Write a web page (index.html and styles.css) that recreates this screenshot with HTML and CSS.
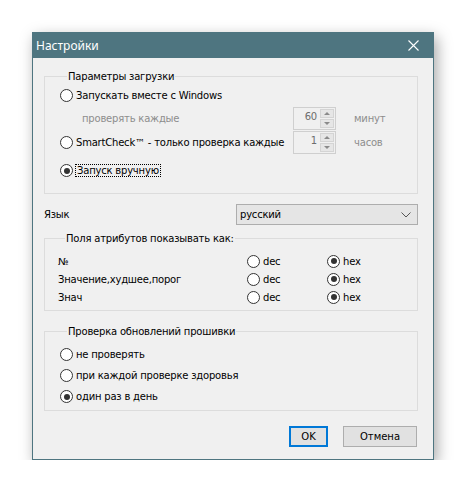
FILE: index.html
```html
<!DOCTYPE html>
<html lang="ru">
<head>
  <meta charset="UTF-8">
  <title>Настройки</title>
  <link rel="stylesheet" href="styles.css">
</head>
<body>
  <div class="window">
    <div class="titlebar">
      <span class="title">Настройки</span>
      <svg class="close" width="11" height="11" viewBox="0 0 11 11"><path d="M0.5 0.5L10.5 10.5M10.5 0.5L0.5 10.5" stroke="#fff" stroke-width="1.1"/></svg>
    </div>

    <div class="content">
      <fieldset class="group boot">
        <legend>Параметры загрузки</legend>
        <div class="boot-row r1">
          <label class="radio"><span class="circle"></span>Запускать вместе с Windows</label>
        </div>
        <div class="boot-row r2">
          <span class="muted indent">проверять каждые</span>
          <div class="spin"><span class="spin-val">60</span><span class="spin-btns"><span class="up"></span><span class="down"></span></span></div>
          <span class="muted unit">минут</span>
        </div>
        <div class="boot-row r3">
          <label class="radio"><span class="circle"></span>SmartCheck™ - только проверка каждые</label>
          <div class="spin"><span class="spin-val">1</span><span class="spin-btns"><span class="up"></span><span class="down"></span></span></div>
          <span class="muted unit">часов</span>
        </div>
        <div class="boot-row r4">
          <label class="radio checked"><span class="circle"></span><span class="focus">Запуск вручную</span></label>
        </div>
      </fieldset>

      <div class="lang-row">
        <span>Язык</span>
        <div class="select">
          <span>русский</span>
          <svg width="10" height="6" viewBox="0 0 10 6"><path d="M0.5 0.5L5 5L9.5 0.5" fill="none" stroke="#555" stroke-width="1"/></svg>
        </div>
      </div>

      <fieldset class="group attrs">
        <legend>Поля атрибутов показывать как:</legend>
        <div class="attr-row">
          <span>№</span>
          <label class="radio"><span class="circle"></span>dec</label>
          <label class="radio checked"><span class="circle"></span>hex</label>
        </div>
        <div class="attr-row">
          <span>Значение,худшее,порог</span>
          <label class="radio"><span class="circle"></span>dec</label>
          <label class="radio checked"><span class="circle"></span>hex</label>
        </div>
        <div class="attr-row">
          <span>Знач</span>
          <label class="radio"><span class="circle"></span>dec</label>
          <label class="radio checked"><span class="circle"></span>hex</label>
        </div>
      </fieldset>

      <fieldset class="group firmware">
        <legend>Проверка обновлений прошивки</legend>
        <label class="radio"><span class="circle"></span>не проверять</label>
        <label class="radio"><span class="circle"></span>при каждой проверке здоровья</label>
        <label class="radio checked"><span class="circle"></span>один раз в день</label>
      </fieldset>

      <div class="buttons">
        <button class="btn ok">OK</button>
        <button class="btn cancel">Отмена</button>
      </div>
    </div>
  </div>
</body>
</html>
```

FILE: styles.css
```css
body { margin:0; background:#fff; font-family:"DejaVu Sans",sans-serif; font-size:10px; letter-spacing:-0.2px; color:#000; }
.window { margin:32px 0 0 32px; width:400px; height:426px; border:1px solid #4e7580;
          background:#f0f0f0; box-shadow:3px 5px 14px rgba(0,0,0,0.35); display:flex; flex-direction:column; }
.titlebar { height:25px; background:#4e7580; color:#fff; display:flex; align-items:center;
            justify-content:space-between; padding:0 14px 0 3px; flex:none; }
.title { font-family:"Noto Sans",sans-serif; font-size:12px; letter-spacing:0; }
.close { display:block; }

.content { padding:0 15px 0 11px; display:flex; flex-direction:column; }

.group { border:1px solid #dcdcdc; margin:0; padding:0; min-width:0; }
.group legend { margin-left:7px; padding:0 1px; line-height:13px; }

.radio { display:flex; align-items:center; gap:3px; white-space:nowrap; }
.circle { width:11px; height:11px; border:1px solid #333; border-radius:50%; background:#fff;
          display:flex; align-items:center; justify-content:center; flex:none; }
.checked .circle::after { content:""; width:6px; height:6px; border-radius:50%; background:#333; }
.focus { outline:1px dotted #000; outline-offset:0; padding:0 1px; }
.muted { color:#8d8d8d; }

.boot { margin-top:12px; padding:0 0 9px 15px; }
.boot-row { display:grid; grid-template-columns:233px 43px auto; align-items:center; }
.r1 { height:24px; }
.r2 { height:21px; }
.r3 { height:29px; }
.r4 { height:27px; }
.indent { padding-left:22px; }
.unit { margin-left:18px; }

.spin { height:21px; border:1px solid #cfcfcf; display:flex; align-items:stretch; background:#f0f0f0; }
.spin-val { flex:1; text-align:right; padding:3px 3px 0 0; color:#6d6d6d; }
.spin-btns { width:14px; display:flex; flex-direction:column; gap:1px; padding:1px 1px 1px 0; }
.spin-btns span { flex:1; background:#e6e6e6; border:1px solid #d4d4d4; position:relative; }
.spin-btns .up::after, .spin-btns .down::after { content:""; position:absolute; left:3px; top:2px;
          border-left:3px solid transparent; border-right:3px solid transparent; }
.spin-btns .up::after { border-bottom:3px solid #8a8a8a; }
.spin-btns .down::after { border-top:3px solid #8a8a8a; }

.lang-row { display:flex; justify-content:space-between; align-items:center; margin-top:10px; }
.select { width:171px; height:19px; border:1px solid #adadad; background:#e5e5e5; display:flex;
          align-items:center; justify-content:space-between; padding:0 6px 0 3px; }

.attrs { margin-top:7px; padding:7px 0 4px 13px; }
.attr-row { display:grid; grid-template-columns:189px 80px auto; height:18px; align-items:center; }

.firmware { margin-top:14px; padding:6px 0 3px 15px; display:flex; flex-direction:column; }
.firmware .radio { height:21px; }

.buttons { display:flex; justify-content:flex-end; gap:15px; margin-top:15px; padding-right:1px; }
.btn { font-family:"DejaVu Sans",sans-serif; font-size:10px; height:21px; background:#e1e1e1;
       border:1px solid #adadad; color:#000; padding:0; }
.ok { width:39px; border:2px solid #0078d7; }
.cancel { width:74px; }
```
